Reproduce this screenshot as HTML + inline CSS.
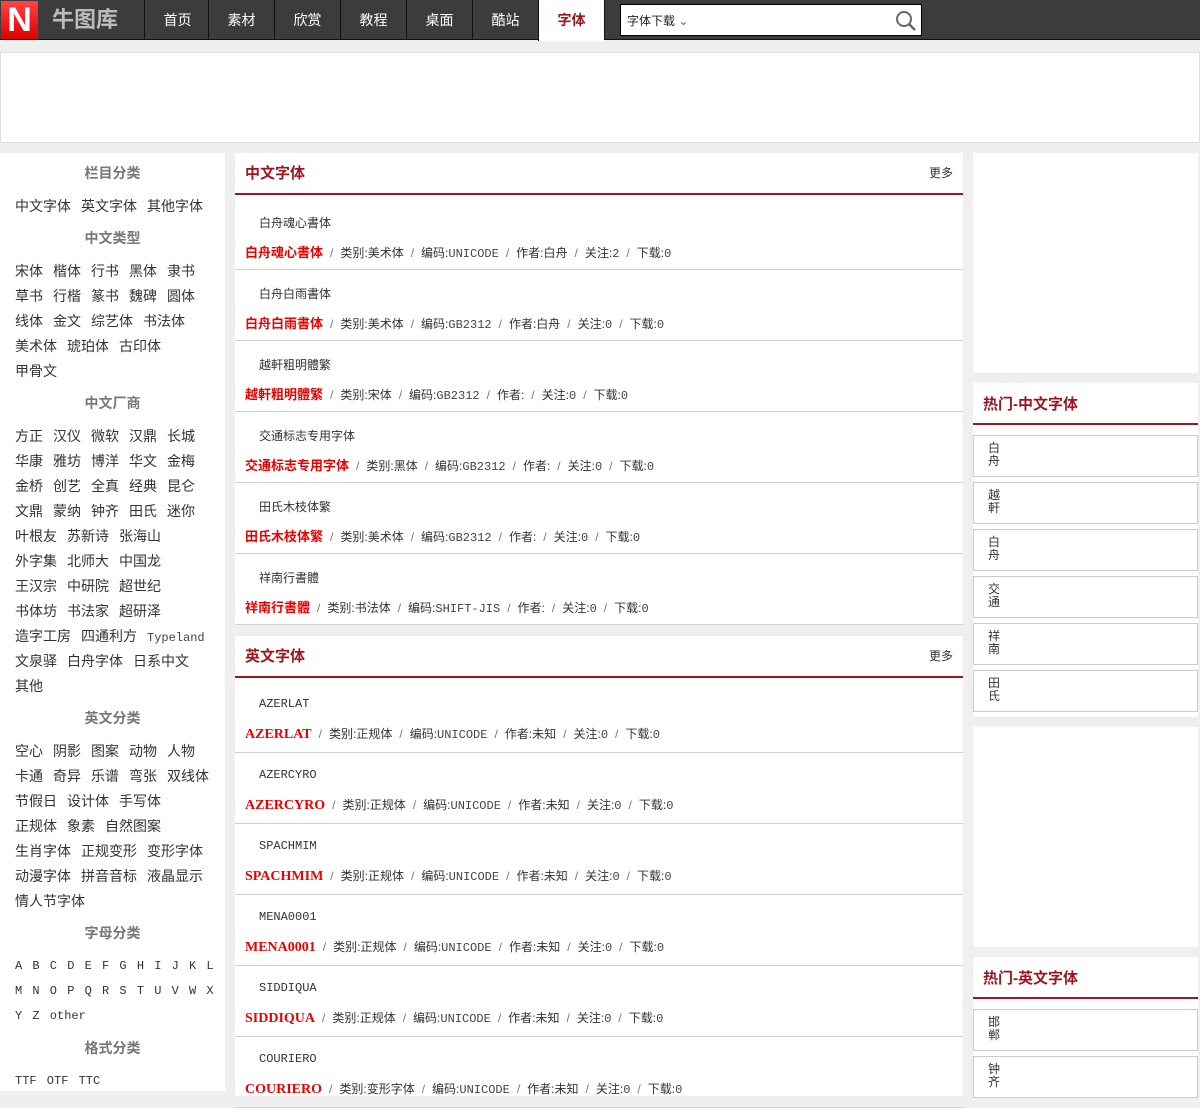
<!DOCTYPE html>
<html><head><meta charset="utf-8">
<style>
*{margin:0;padding:0;box-sizing:border-box}
body{width:1200px;height:1091px;overflow:hidden;background:#efefef;font-family:"Liberation Sans","Noto Sans CJK SC",sans-serif;font-size:12px;color:#333;position:relative}
.a{position:absolute}
#hd{left:0;top:0;width:1200px;height:40px;background:#3c3c3c;border-bottom:1px solid #111}
#logo{left:1px;top:1px;width:37px;height:38px;background:linear-gradient(#f44,#d00);color:#fff;font:bold 34px/38px "Liberation Sans",sans-serif;text-align:center}
#brand{left:52px;top:7px;color:#bbb;font-size:22px;font-weight:bold;line-height:26px}
.nav{top:0;height:40px;width:66px;color:#fff;font-size:14px;line-height:40px;text-align:center;border-left:1px solid #111}
#srch{left:620px;top:4px;width:302px;height:32px;background:#fff;border:1px solid #000}
.w{background:#fff}
.side h3{position:absolute;left:0;width:225px;text-align:center;color:#777;font-size:14px;font-weight:bold}
.side p{position:absolute;left:15px;font-size:14px;color:#333;white-space:nowrap;word-spacing:0}
.side p span{margin-right:10px}
.mono{font-family:"Liberation Mono",monospace;font-size:12px;color:#444}
.sec h2{position:absolute;left:10px;top:9px;font-size:15px;color:#a0141e;font-weight:bold}
.more{position:absolute;right:10px;top:11px;font-size:12px;color:#333}
.bar{position:absolute;left:0;width:728px;height:2px;background:#a0141e}
.row{position:absolute;left:0;width:728px;height:71px;border-bottom:1px solid #d0d0d0}
.row .t{position:absolute;left:24px;top:15px;font-size:12px;color:#333}
.row .m{position:absolute;left:10px;top:43px;font-size:12px;color:#333;white-space:nowrap}
.row .m b{color:#e00;font-size:13px;font-weight:bold}
.row .m i{font-style:normal;color:#777;margin:0 7px}
.row .m b.s{font-family:"Liberation Serif",serif;font-size:14px}
.hot h2{position:absolute;left:10px;top:10px;font-size:15px;color:#a0141e;font-weight:bold}
.it{position:absolute;left:0;width:225px;height:42px;border:1px solid #ccc;background:#fff}
.it span{position:absolute;left:14px;top:6px;font-size:12px;line-height:13px;width:14px;color:#333}
</style></head><body>
<div id="hd" class="a"></div>
<div id="logo" class="a">N</div>
<div id="brand" class="a">牛图库</div>
<div class="a nav" style="left:144px">首页</div>
<div class="a nav" style="left:208px">素材</div>
<div class="a nav" style="left:274px">欣赏</div>
<div class="a nav" style="left:340px">教程</div>
<div class="a nav" style="left:406px">桌面</div>
<div class="a nav" style="left:472px">酷站</div>
<div class="a nav" style="left:538px;background:#fff;color:#a0141e;font-weight:bold;height:41px">字体</div>
<div class="a" style="left:604px;top:0;width:1px;height:40px;background:#111"></div>
<div id="srch" class="a"><span class="a" style="left:6px;top:7px;font-size:12px;color:#222">字体下载 <span style="color:#666">⌄</span></span>
<svg class="a" style="left:274px;top:5px" width="22" height="22" viewBox="0 0 22 22"><circle cx="9" cy="9" r="7" fill="none" stroke="#666" stroke-width="2"/><path d="M14 14l6 6" stroke="#666" stroke-width="2.5"/></svg></div>

<div class="a w" style="left:0;top:52px;width:1200px;height:91px;border:1px solid #ddd"></div>

<div class="a w side" style="left:0;top:153px;width:225px;height:938px">
<h3 style="top:10px">栏目分类</h3>
<p style="top:43px"><span>中文字体</span><span>英文字体</span><span>其他字体</span></p>
<h3 style="top:75px">中文类型</h3>
<p style="top:108px"><span>宋体</span><span>楷体</span><span>行书</span><span>黑体</span><span>隶书</span></p>
<p style="top:133px"><span>草书</span><span>行楷</span><span>篆书</span><span>魏碑</span><span>圆体</span></p>
<p style="top:158px"><span>线体</span><span>金文</span><span>综艺体</span><span>书法体</span></p>
<p style="top:183px"><span>美术体</span><span>琥珀体</span><span>古印体</span></p>
<p style="top:208px"><span>甲骨文</span></p>
<h3 style="top:240px">中文厂商</h3>
<p style="top:273px"><span>方正</span><span>汉仪</span><span>微软</span><span>汉鼎</span><span>长城</span></p>
<p style="top:298px"><span>华康</span><span>雅坊</span><span>博洋</span><span>华文</span><span>金梅</span></p>
<p style="top:323px"><span>金桥</span><span>创艺</span><span>全真</span><span>经典</span><span>昆仑</span></p>
<p style="top:348px"><span>文鼎</span><span>蒙纳</span><span>钟齐</span><span>田氏</span><span>迷你</span></p>
<p style="top:373px"><span>叶根友</span><span>苏新诗</span><span>张海山</span></p>
<p style="top:398px"><span>外字集</span><span>北师大</span><span>中国龙</span></p>
<p style="top:423px"><span>王汉宗</span><span>中研院</span><span>超世纪</span></p>
<p style="top:448px"><span>书体坊</span><span>书法家</span><span>超研泽</span></p>
<p style="top:473px"><span>造字工房</span><span>四通利方</span><span class="mono" style="font-size:12px">Typeland</span></p>
<p style="top:498px"><span>文泉驿</span><span>白舟字体</span><span>日系中文</span></p>
<p style="top:523px"><span>其他</span></p>
<h3 style="top:555px">英文分类</h3>
<p style="top:588px"><span>空心</span><span>阴影</span><span>图案</span><span>动物</span><span>人物</span></p>
<p style="top:613px"><span>卡通</span><span>奇异</span><span>乐谱</span><span>弯张</span><span>双线体</span></p>
<p style="top:638px"><span>节假日</span><span>设计体</span><span>手写体</span></p>
<p style="top:663px"><span>正规体</span><span>象素</span><span>自然图案</span></p>
<p style="top:688px"><span>生肖字体</span><span>正规变形</span><span>变形字体</span></p>
<p style="top:713px"><span>动漫字体</span><span>拼音音标</span><span>液晶显示</span></p>
<p style="top:738px"><span>情人节字体</span></p>
<h3 style="top:770px">字母分类</h3>
<p class="mono" style="top:806px;font-size:12px;word-spacing:3px;color:#333">A B C D E F G H I J K L</p>
<p class="mono" style="top:831px;font-size:12px;word-spacing:3px;color:#333">M N O P Q R S T U V W X</p>
<p class="mono" style="top:856px;font-size:12px;word-spacing:3px;color:#333">Y Z other</p>
<h3 style="top:885px">格式分类</h3>
<p class="mono" style="top:921px;font-size:12px;word-spacing:3px;color:#333">TTF OTF TTC</p>
</div>

<div class="a w sec" style="left:235px;top:153px;width:728px;height:472px">
<h2>中文字体</h2><span class="more">更多</span>
<div class="bar" style="top:40px"></div>
<div class="row" style="top:46px"><span class="t">白舟魂心書体</span><span class="m"><b>白舟魂心書体</b><i>/</i>类别:美术体<i>/</i>编码:<span class="mono">UNICODE</span><i>/</i>作者:白舟<i>/</i>关注:<span class="mono">2</span><i>/</i>下载:<span class="mono">0</span></span></div>
<div class="row" style="top:117px"><span class="t">白舟白雨書体</span><span class="m"><b>白舟白雨書体</b><i>/</i>类别:美术体<i>/</i>编码:<span class="mono">GB2312</span><i>/</i>作者:白舟<i>/</i>关注:<span class="mono">0</span><i>/</i>下载:<span class="mono">0</span></span></div>
<div class="row" style="top:188px"><span class="t">越軒粗明體繁</span><span class="m"><b>越軒粗明體繁</b><i>/</i>类别:宋体<i>/</i>编码:<span class="mono">GB2312</span><i>/</i>作者:<i>/</i>关注:<span class="mono">0</span><i>/</i>下载:<span class="mono">0</span></span></div>
<div class="row" style="top:259px"><span class="t">交通标志专用字体</span><span class="m"><b>交通标志专用字体</b><i>/</i>类别:黑体<i>/</i>编码:<span class="mono">GB2312</span><i>/</i>作者:<i>/</i>关注:<span class="mono">0</span><i>/</i>下载:<span class="mono">0</span></span></div>
<div class="row" style="top:330px"><span class="t">田氏木枝体繁</span><span class="m"><b>田氏木枝体繁</b><i>/</i>类别:美术体<i>/</i>编码:<span class="mono">GB2312</span><i>/</i>作者:<i>/</i>关注:<span class="mono">0</span><i>/</i>下载:<span class="mono">0</span></span></div>
<div class="row" style="top:401px"><span class="t">祥南行書體</span><span class="m"><b>祥南行書體</b><i>/</i>类别:书法体<i>/</i>编码:<span class="mono">SHIFT-JIS</span><i>/</i>作者:<i>/</i>关注:<span class="mono">0</span><i>/</i>下载:<span class="mono">0</span></span></div>
</div>

<div class="a w sec" style="left:235px;top:636px;width:728px;height:460px">
<h2>英文字体</h2><span class="more">更多</span>
<div class="bar" style="top:40px"></div>
<div class="row" style="top:46px"><span class="t mono">AZERLAT</span><span class="m"><b class="s">AZERLAT</b><i>/</i>类别:正规体<i>/</i>编码:<span class="mono">UNICODE</span><i>/</i>作者:未知<i>/</i>关注:<span class="mono">0</span><i>/</i>下载:<span class="mono">0</span></span></div>
<div class="row" style="top:117px"><span class="t mono">AZERCYRO</span><span class="m"><b class="s">AZERCYRO</b><i>/</i>类别:正规体<i>/</i>编码:<span class="mono">UNICODE</span><i>/</i>作者:未知<i>/</i>关注:<span class="mono">0</span><i>/</i>下载:<span class="mono">0</span></span></div>
<div class="row" style="top:188px"><span class="t mono">SPACHMIM</span><span class="m"><b class="s">SPACHMIM</b><i>/</i>类别:正规体<i>/</i>编码:<span class="mono">UNICODE</span><i>/</i>作者:未知<i>/</i>关注:<span class="mono">0</span><i>/</i>下载:<span class="mono">0</span></span></div>
<div class="row" style="top:259px"><span class="t mono">MENA0001</span><span class="m"><b class="s">MENA0001</b><i>/</i>类别:正规体<i>/</i>编码:<span class="mono">UNICODE</span><i>/</i>作者:未知<i>/</i>关注:<span class="mono">0</span><i>/</i>下载:<span class="mono">0</span></span></div>
<div class="row" style="top:330px"><span class="t mono">SIDDIQUA</span><span class="m"><b class="s">SIDDIQUA</b><i>/</i>类别:正规体<i>/</i>编码:<span class="mono">UNICODE</span><i>/</i>作者:未知<i>/</i>关注:<span class="mono">0</span><i>/</i>下载:<span class="mono">0</span></span></div>
<div class="row" style="top:401px"><span class="t mono">COURIERO</span><span class="m"><b class="s">COURIERO</b><i>/</i>类别:变形字体<i>/</i>编码:<span class="mono">UNICODE</span><i>/</i>作者:未知<i>/</i>关注:<span class="mono">0</span><i>/</i>下载:<span class="mono">0</span></span></div>
</div>

<div class="a w" style="left:973px;top:153px;width:225px;height:220px"></div>
<div class="a w hot" style="left:973px;top:383px;width:225px;height:334px">
<h2>热门-中文字体</h2>
<div class="bar" style="top:40px;width:225px"></div>
<div class="it" style="top:52px"><span>白舟</span></div>
<div class="it" style="top:99px"><span>越軒</span></div>
<div class="it" style="top:146px"><span>白舟</span></div>
<div class="it" style="top:193px"><span>交通</span></div>
<div class="it" style="top:240px"><span>祥南</span></div>
<div class="it" style="top:287px"><span>田氏</span></div>
</div>
<div class="a w" style="left:973px;top:727px;width:225px;height:220px"></div>
<div class="a w hot" style="left:973px;top:957px;width:225px;height:140px">
<h2>热门-英文字体</h2>
<div class="bar" style="top:40px;width:225px"></div>
<div class="it" style="top:52px"><span>邯郸</span></div>
<div class="it" style="top:99px"><span>钟齐</span></div>
</div>
</body></html>
